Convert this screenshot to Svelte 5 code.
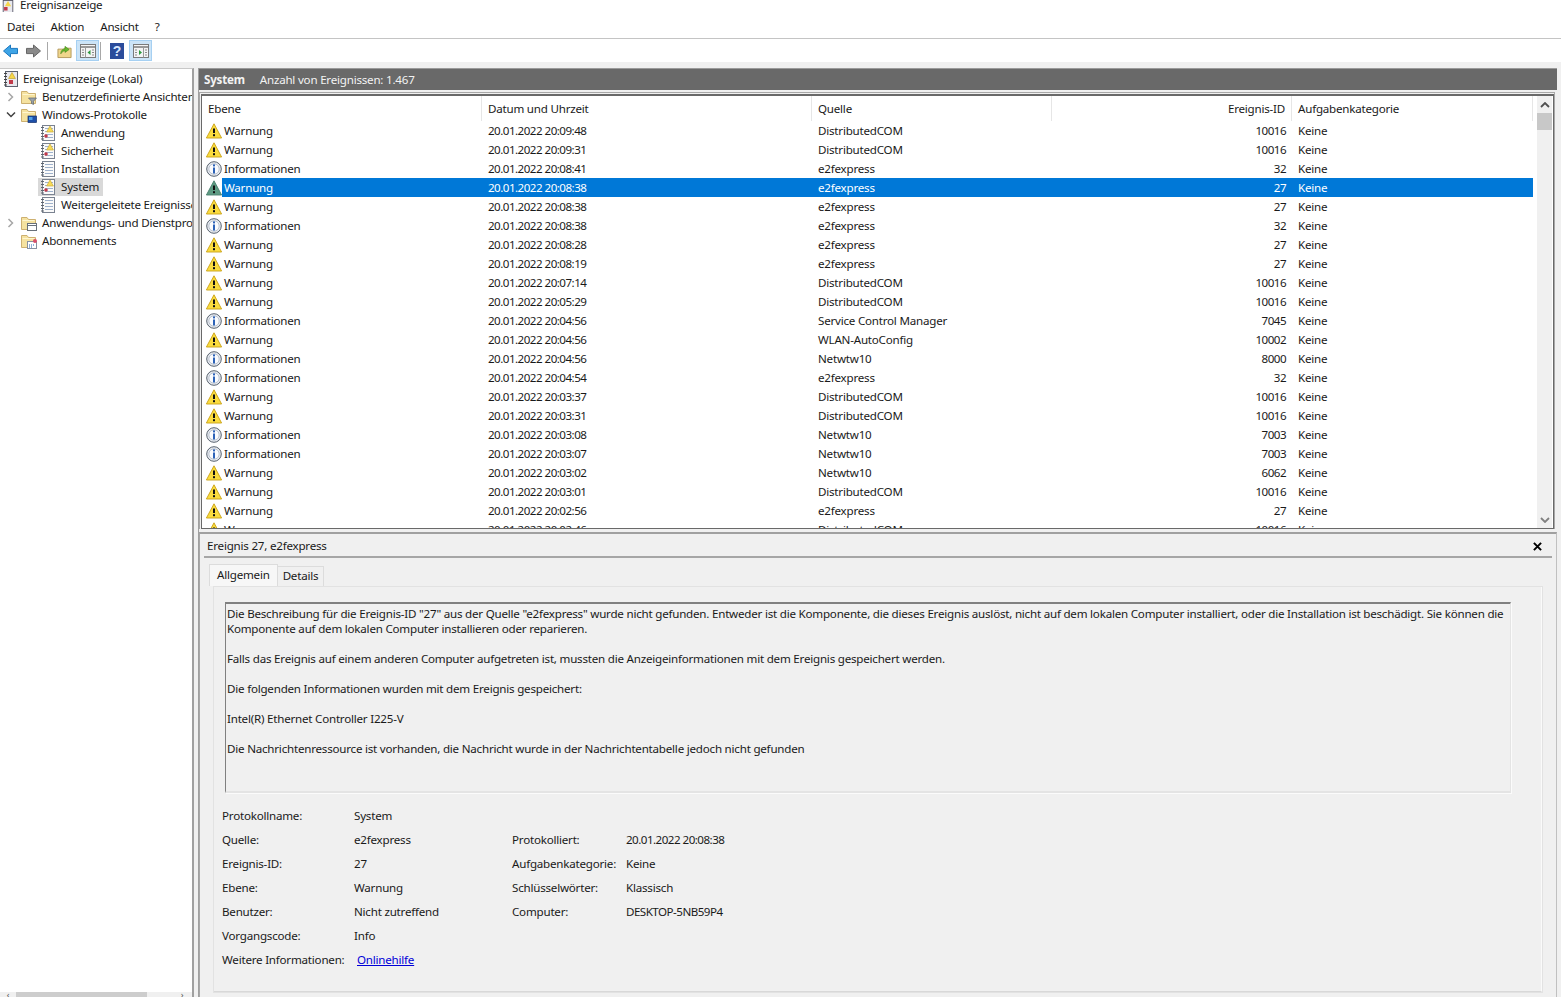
<script>
  const raw = `W|20.01.2022 20:09:48|DistributedCOM|10016
W|20.01.2022 20:09:31|DistributedCOM|10016
I|20.01.2022 20:08:41|e2fexpress|32
W|20.01.2022 20:08:38|e2fexpress|27
W|20.01.2022 20:08:38|e2fexpress|27
I|20.01.2022 20:08:38|e2fexpress|32
W|20.01.2022 20:08:28|e2fexpress|27
W|20.01.2022 20:08:19|e2fexpress|27
W|20.01.2022 20:07:14|DistributedCOM|10016
W|20.01.2022 20:05:29|DistributedCOM|10016
I|20.01.2022 20:04:56|Service Control Manager|7045
W|20.01.2022 20:04:56|WLAN-AutoConfig|10002
I|20.01.2022 20:04:56|Netwtw10|8000
I|20.01.2022 20:04:54|e2fexpress|32
W|20.01.2022 20:03:37|DistributedCOM|10016
W|20.01.2022 20:03:31|DistributedCOM|10016
I|20.01.2022 20:03:08|Netwtw10|7003
I|20.01.2022 20:03:07|Netwtw10|7003
W|20.01.2022 20:03:02|Netwtw10|6062
W|20.01.2022 20:03:01|DistributedCOM|10016
W|20.01.2022 20:02:56|e2fexpress|27
W|20.01.2022 20:02:46|DistributedCOM|10016`;
  const rows = raw.split('\n').map((l) => {
    const [k, date, src, id] = l.split('|');
    return { k, date, src, id };
  });
  const tree = [
    { label: 'Benutzerdefinierte Ansichten', lvl: 1, icon: 'filter', tw: 'r' },
    { label: 'Windows-Protokolle', lvl: 1, icon: 'winfolder', tw: 'd' },
    { label: 'Anwendung', lvl: 2, icon: 'logw' },
    { label: 'Sicherheit', lvl: 2, icon: 'logw' },
    { label: 'Installation', lvl: 2, icon: 'log' },
    { label: 'System', lvl: 2, icon: 'logw', sel: true },
    { label: 'Weitergeleitete Ereignisse', lvl: 2, icon: 'log' },
    { label: 'Anwendungs- und Dienstprotokolle', lvl: 1, icon: 'appfolder', tw: 'r' },
    { label: 'Abonnements', lvl: 1, icon: 'subs' }
  ];
  const leftInfo = [
    ['Quelle:', 'e2fexpress', 'Protokolliert:', '20.01.2022 20:08:38'],
    ['Ereignis-ID:', '27', 'Aufgabenkategorie:', 'Keine'],
    ['Ebene:', 'Warnung', 'Schlüsselwörter:', 'Klassisch'],
    ['Benutzer:', 'Nicht zutreffend', 'Computer:', 'DESKTOP-5NB59P4']
  ];
</script>

{#snippet logIcon(w)}
  <svg class="ti" viewBox="0 0 16 16" width="16" height="16">
    <rect x="2.5" y="0.5" width="12" height="15" fill="#fafafa" stroke="#7a8290" />
    <path d="M1 2.5h3M1 5.5h3M1 8.5h3M1 11.500h3M1 14h3" stroke="#5f6670" stroke-width="1" />
    <path d="M5 3.500h8M5 6.500h8M5 9.500h8M5 12.500h8" stroke="#9fb2cc" stroke-width="1" />
    {#if w}
      <path d="M10 1l3.400 6H6.600z" fill="#f8dc58" stroke="#c8ab3a" stroke-width="0.7" />
      <circle cx="6" cy="11" r="1.800" fill="#c23a4a" />
    {/if}
  </svg>
{/snippet}

{#snippet folder(kind)}
  <svg class="ti" viewBox="0 0 16 16" width="16" height="16">
    <path d="M0.500 2.500V14.500H14.500V4.500H7.500L6 2.500z" fill="#f5e2a0" stroke="#cdb070" />
    <path d="M1.500 5.500h12" stroke="#fff6d0" />
    {#if kind === 'filter'}
      <path d="M7.500 9h8l-3 3.200v3.300l-2-1v-2.300z" fill="#9aa3ad" stroke="#5b636c" stroke-width="0.7" />
    {:else if kind === 'winfolder'}
      <rect x="7" y="9" width="8.500" height="6.500" fill="#1d4fa8" stroke="#12306a" stroke-width="0.7" />
      <path d="M8 10h3.500v3H8z" fill="#4fa0e8" />
    {:else if kind === 'appfolder'}
      <rect x="6.500" y="8.500" width="9" height="7" fill="#fff" stroke="#68707a" />
      <path d="M6.500 10.500h9" stroke="#68707a" />
    {:else}
      <rect x="6.500" y="8.500" width="9" height="7" fill="#fff" stroke="#8790a0" />
      <path d="M8 12h1M10 12h1M12 12h1M8 14h1M10 14h1" stroke="#2560b0" />
      <circle cx="14" cy="8" r="2" fill="#d8506a" />
    {/if}
  </svg>
{/snippet}

{#snippet warn(sel)}
  <svg class="lvl" viewBox="0 0 16 16" width="16" height="16">
    <path d="M8 .8L15.600 15H.4z" fill={sel ? '#5d9a82' : '#fbdc3f'} stroke={sel ? '#4a7f6d' : '#c8a015'} stroke-width="0.9" stroke-linejoin="round" />
    <path d="M8 5.500v4.500" stroke="#111" stroke-width="2" />
    <rect x="7" y="11.200" width="2" height="2" fill="#111" />
  </svg>
{/snippet}

{#snippet info()}
  <svg class="lvl" viewBox="0 0 16 16" width="16" height="16">
    <circle cx="8" cy="8" r="7.300" fill="#e8ebf1" stroke="#59636f" />
    <circle cx="8" cy="8" r="5.200" fill="#fafbfe" stroke="#b9c2ce" />
    <rect x="7" y="3.400" width="2" height="2" fill="#2c62b8" />
    <path d="M8 6.500v6" stroke="#2c62b8" stroke-width="2" />
  </svg>
{/snippet}

<div class="app">
  <div class="title">
    <svg class="tlogo" viewBox="0 0 16 16" width="14" height="14">
      <rect x="2.500" y="0.500" width="11" height="14" fill="#e9e9ef" stroke="#556" />
      <path d="M8 1l3.600 6H4.400z" fill="#f6d64a" />
      <rect x="3.500" y="8" width="4" height="4" fill="#c23a4a" />
    </svg>
    <span>Ereignisanzeige</span>
  </div>

  <nav class="menu">
    <span>Datei</span><span>Aktion</span><span>Ansicht</span><span>?</span>
  </nav>

  <div class="toolbar">
    <svg class="tb arrow" viewBox="0 0 16 16" width="17" height="16">
      <path d="M1 8L8 2v3.400h7v5.200H8V14z" fill="#3ea4e6" stroke="#1b78c0" stroke-linejoin="round" />
    </svg>
    <svg class="tb arrow2" viewBox="0 0 16 16" width="17" height="16">
      <path d="M15 8L8 2v3.400H1v5.200h7V14z" fill="#8a8a8a" stroke="#666" stroke-linejoin="round" />
    </svg>
    <i class="sep s1"></i>
    <svg class="tb up" viewBox="0 0 16 16" width="15" height="16">
      <path d="M1 6h6l1-1h7v10H1z" fill="#f0d68c" stroke="#b3985a" />
      <path d="M4 11c0-3 1.500-5 4.500-5.500V3L13 6.400 8.500 9.500V7.500C6.800 8 5.500 9 4 11z" fill="#66b82e" stroke="#3f8418" stroke-width="0.6" />
    </svg>
    <span class="hot h1">
      <svg viewBox="0 0 16 14" width="16" height="14">
        <rect x="0.500" y="0.500" width="15" height="13" fill="#f4f4f4" stroke="#7b7b7b" />
        <path d="M0.500 3h15" stroke="#7b7b7b" stroke-width="1.500" />
        <path d="M5.500 3v10.500" stroke="#9a9a9a" />
        <path d="M2 6h2M2 8.500h2M2 11h2M12 6h2M12 8.500h2M12 11h2" stroke="#8a8a8a" />
        <path d="M10.500 6l-3 2.500 3 2.500z" fill="#2f9a3f" />
      </svg>
    </span>
    <i class="sep s2"></i>
    <svg class="tb help" viewBox="0 0 14 16" width="14" height="16">
      <rect width="14" height="16" fill="#2b4c9b" />
      <text x="7" y="13" text-anchor="middle" class="q">?</text>
    </svg>
    <span class="hot h2">
      <svg viewBox="0 0 16 14" width="16" height="14">
        <rect x="0.500" y="0.500" width="15" height="13" fill="#f4f4f4" stroke="#7b7b7b" />
        <path d="M0.500 3h15" stroke="#7b7b7b" stroke-width="1.500" />
        <path d="M10.500 3v10.500" stroke="#9a9a9a" />
        <path d="M2 6h2M2 8.500h2M2 11h2M12 6h2M12 8.500h2M12 11h2" stroke="#8a8a8a" />
        <path d="M6 6l3 2.500-3 2.500z" fill="#2f9a3f" />
      </svg>
    </span>
  </div>

  <div class="main">
    <aside class="tree">
      <div class="troot">
        <svg class="ti" viewBox="0 0 16 16" width="16" height="16">
          <rect x="2.500" y="0.500" width="12" height="15" fill="#e8e8ee" stroke="#5c6270" />
          <path d="M1 2.500h3M1 5.500h3M1 8.500h3M1 11.500h3M1 14h3" stroke="#444" />
          <path d="M9 1.500l3.400 6H5.600z" fill="#f6d64a" stroke="#b89a20" stroke-width="0.6" />
          <rect x="6" y="9" width="4" height="4" fill="#c23a4a" />
        </svg>
        <span>Ereignisanzeige (Lokal)</span>
      </div>
      {#each tree as t}
        <div class="tnode" class:l2={t.lvl === 2}>
          <span class="tw">
            {#if t.tw === 'r'}
              <svg viewBox="0 0 8 10" width="8" height="10"><path d="M1.500 1l4 4-4 4" fill="none" stroke="#a6a6a6" stroke-width="1.500" /></svg>
            {:else if t.tw === 'd'}
              <svg viewBox="0 0 10 8" width="10" height="8"><path d="M1 1.500l4 4 4-4" fill="none" stroke="#404040" stroke-width="1.500" /></svg>
            {/if}
          </span>
          <span class="tbox" class:sel={t.sel}>
            {#if t.icon === 'log'}
              {@render logIcon(false)}
            {:else if t.icon === 'logw'}
              {@render logIcon(true)}
            {:else}
              {@render folder(t.icon)}
            {/if}
            <span class="tl">{t.label}</span>
          </span>
        </div>
      {/each}
      <div class="hscroll">
        <span class="ha">‹</span><span class="hthumb"></span><span class="ha r">›</span>
      </div>
    </aside>

    <section class="right">
      <header class="band"><b>System</b><span>Anzahl von Ereignissen: 1.467</span></header>

      <div class="listwrap">
        <div class="list">
          <div class="grid">
            <div class="thead">
              <span>Ebene</span><span>Datum und Uhrzeit</span><span>Quelle</span><span class="num">Ereignis-ID</span><span>Aufgabenkategorie</span>
            </div>
            <div class="tbody">
              {#each rows as r, i}
                <div class="row" class:selected={i === 3}>
                  <span class="c1">
                    {#if r.k === 'W'}{@render warn(i === 3)}{:else}{@render info()}{/if}
                    <em>{r.k === 'W' ? 'Warnung' : 'Informationen'}</em>
                  </span>
                  <span class="d">{r.date}</span>
                  <span>{r.src}</span>
                  <span class="num d">{r.id}</span>
                  <span>Keine</span>
                </div>
              {/each}
            </div>
          </div>
          <div class="vscroll">
            <svg viewBox="0 0 10 6" width="10" height="6" class="va"><path d="M1 5l4-4 4 4" fill="none" stroke="#505050" stroke-width="1.800" /></svg>
            <span class="vthumb"></span>
            <svg viewBox="0 0 10 6" width="10" height="6" class="vb"><path d="M1 1l4 4 4-4" fill="none" stroke="#808080" stroke-width="1.800" /></svg>
          </div>
        </div>
      </div>

      <div class="detail">
        <div class="dtitle">
          <span>Ereignis 27, e2fexpress</span>
          <svg viewBox="0 0 10 10" width="9" height="9"><path d="M1 1l8 8M9 1l-8 8" stroke="#000" stroke-width="2.200" /></svg>
        </div>
        <div class="tabs">
          <span class="tab on">Allgemein</span><span class="tab">Details</span>
        </div>
        <div class="page">
          <div class="msg">Die Beschreibung für die Ereignis-ID "27" aus der Quelle "e2fexpress" wurde nicht gefunden. Entweder ist die Komponente, die dieses Ereignis auslöst, nicht auf dem lokalen Computer installiert, oder die Installation ist beschädigt. Sie können die<br />Komponente auf dem lokalen Computer installieren oder reparieren.<br /><br />Falls das Ereignis auf einem anderen Computer aufgetreten ist, mussten die Anzeigeinformationen mit dem Ereignis gespeichert werden.<br /><br />Die folgenden Informationen wurden mit dem Ereignis gespeichert:<br /><br />Intel(R) Ethernet Controller I225-V<br /><br />Die Nachrichtenressource ist vorhanden, die Nachricht wurde in der Nachrichtentabelle jedoch nicht gefunden</div>
          <div class="props">
            <div class="prow"><span>Protokollname:</span><span>System</span></div>
            {#each leftInfo as p, i}
              <div class="prow"><span>{p[0]}</span><span>{p[1]}</span><span>{p[2]}</span><span class:d={i === 0 || i === 3}>{p[3]}</span></div>
            {/each}
            <div class="prow"><span>Vorgangscode:</span><span>Info</span></div>
            <div class="prow"><span>Weitere Informationen:</span><a href="#help" class="link">Onlinehilfe</a></div>
          </div>
        </div>
      </div>
    </section>
  </div>
</div>

<style>
  :global(body) { margin: 0; background: #f0f0f0; }
  .app {
    width: 1561px; height: 997px; overflow: hidden;
    display: flex; flex-direction: column;
    font: 11.6px/16px "Noto Sans", "Open Sans", sans-serif;
    color: #1a1a1a; letter-spacing: -0.22px;
  }
  .d { letter-spacing: -0.52px; }
  .title {
    height: 12px; background: #fff; display: flex; align-items: flex-end;
    padding-left: 1px; gap: 5px; overflow: hidden; flex: none;
  }
  .title span { line-height: 12px; position: relative; top: -1px; }
  .tlogo { margin-bottom: -2px; }
  .menu {
    background: #fff; border-bottom: 1px solid #c4c4c4;
    display: flex; align-items: center; gap: 16px; padding: 3px 0 0 7px; flex: none;
    box-sizing: border-box; height: 27px;
  }
  .toolbar {
    height: 23px; background: #fff; display: flex; align-items: center; flex: none;
  }
  .tb { flex: none; }
  .arrow { margin-left: 2px; }
  .arrow2 { margin-left: 6px; }
  .sep { width: 1px; height: 18px; background: #a8a8a8; flex: none; }
  .s1 { margin: 0 9px 0 5px; }
  .up { margin-right: 4px; }
  .hot {
    width: 21px; height: 19px; background: #cce4f7; border: 1px solid #a6d0f2;
    display: flex; align-items: center; justify-content: center; flex: none;
  }
  .s2 { margin: 0 9px 0 1px; }
  .h2 { margin-left: 5px; }
  .q { font: 700 14px "Liberation Sans", sans-serif; fill: #d7e6ff; }
  .main { flex: 1; display: flex; padding-top: 6px; min-height: 0; }
  .tree {
    width: 192px; margin-right: 4px; background: #fff; flex: none;
    border-right: 2px solid #a0a0a0; border-top: 1px solid #c8c8c8;
    position: relative; overflow: hidden; box-sizing: content-box;
  }
  .troot { height: 18px; display: flex; align-items: center; padding-left: 3px; white-space: nowrap; margin-top: 1px; }
  .troot .ti { margin-right: 4px; }
  .tnode { height: 18px; display: flex; align-items: center; white-space: nowrap; padding-left: 3px; }
  .tnode.l2 { padding-left: 22px; }
  .tw { width: 16px; flex: none; display: flex; justify-content: center; align-items: center; }
  .tbox { display: flex; align-items: center; padding: 0 4px 0 2px; height: 18px; }
  .tbox.sel { background: #d9d9d9; }
  .ti { flex: none; margin-right: 5px; }
  .tl { line-height: 16px; }
  .hscroll {
    position: absolute; left: 0; right: 0; bottom: 0; height: 5px;
    background: #f0f0f0; display: flex; align-items: flex-end;
  }
  .ha { width: 16px; font-size: 9px; line-height: 5px; text-align: center; color: #555; }
  .hthumb { width: 131px; height: 5px; background: #cdcdcd; }
  .ha.r { margin-left: 27px; }
  .right {
    flex: 1; margin-right: 4px; min-width: 0; display: flex; flex-direction: column;
    border-left: 1px solid #a0a0a0;
  }
  .band {
    height: 21px; background: #696969; color: #f3f3f3; flex: none;
    border-top: 1px solid #9a9a9a; display: flex; align-items: center; gap: 15px; padding-left: 5px;
  }
  .band b { font-weight: 700; }
  .listwrap {
    height: 437px; flex: none; margin-top: 2px; border-top: 1px solid #a8a8a8;
    border-left: 1px solid #a8a8a8; border-right: 1px solid #a8a8a8;
    padding-top: 1px; box-sizing: border-box; margin-right: 2px; padding-left: 1px;
  }
  .list {
    height: 435px; border: 1px solid #696969; border-top-width: 2px; box-sizing: border-box;
    background: #fff; display: flex; overflow: hidden;
  }
  .grid { width: 1331px; flex: none; overflow: hidden; }
  .thead, .row {
    display: grid; grid-template-columns: 280px 330px 240px 240px 241px;
  }
  .thead { height: 25px; align-items: center; }
  .thead span { padding-left: 6px; height: 25px; line-height: 25px; border-right: 1px solid #e6e6e6; box-sizing: border-box; }
  .thead .num, .row .num { text-align: right; padding: 0 6px 0 0; }
  .row { height: 19px; line-height: 19px; white-space: nowrap; }
  .row span { padding-left: 6px; }
  .row .c1 { padding-left: 4px; display: flex; align-items: center; gap: 2px; }
  .row em { font-style: normal; line-height: 19px; flex: 1; }
  .row.selected { background: linear-gradient(to right, #fff 20px, #0078d7 20px); color: #fff; }
  .lvl { flex: none; }
  .vscroll { flex: 1; background: #f0f0f0; position: relative; margin-left: 4px; margin-right: 1px; }
  .va { position: absolute; left: 3px; top: 6px; }
  .vb { position: absolute; left: 3px; bottom: 5px; }
  .vthumb { position: absolute; left: 0; right: 0; top: 17px; height: 17px; background: #c8c8c8; }
  .detail {
    flex: 1; min-height: 0; margin-top: 3px; border-top: 2px solid #a0a0a0; border-left: 1px solid #a8a8a8;
    border-right: 1px solid #c0c0c0; background: #f0f0f0; position: relative;
  }
  .dtitle {
    height: 20px; margin: 0 4px; padding: 2px 10px 0 3px; border-bottom: 2px solid #a6a6a6;
    display: flex; align-items: center; justify-content: space-between; box-sizing: content-box;
  }
  .tabs { display: flex; margin: 6px 0 0 9px; height: 22px; align-items: flex-end; }
  .tab {
    height: 20px; padding: 0 5px; line-height: 18px; border: 1px solid #dcdcdc; border-bottom: 0;
    background: #f0f0f0; box-sizing: border-box; border-left: 0;
  }
  .tab.on { height: 22px; background: #f7f7f7; padding: 0 7px; border-left: 1px solid #dcdcdc; line-height: 19px; }
  .page {
    margin: 0 13px 0 13px; height: 407px; border: 1px solid #fafafa; border-right: 2px solid #fafafa;
    border-bottom: 2px solid #d8d8d8; box-sizing: border-box; padding: 15px 30px 0 11px; position: relative;
    outline: 1px solid #e2e2e2; outline-offset: -1px;
  }
  .msg {
    height: 191px; box-sizing: border-box; border-top: 2px solid #808080; border-left: 1px solid #808080;
    border-right: 1px solid #e4e4e4; border-bottom: 2px solid #e4e4e4; padding: 2px 0 0 1px;
    line-height: 15px; white-space: nowrap; overflow: hidden; box-shadow: 1px 1px 0 #fbfbfb;
  }
  .props { margin-top: 11px; margin-left: -3px; }
  .prow { display: grid; grid-template-columns: 132px 158px 114px auto; height: 24px; line-height: 24px; }
  .link { color: #0000d8; margin-left: 3px; }
</style>
